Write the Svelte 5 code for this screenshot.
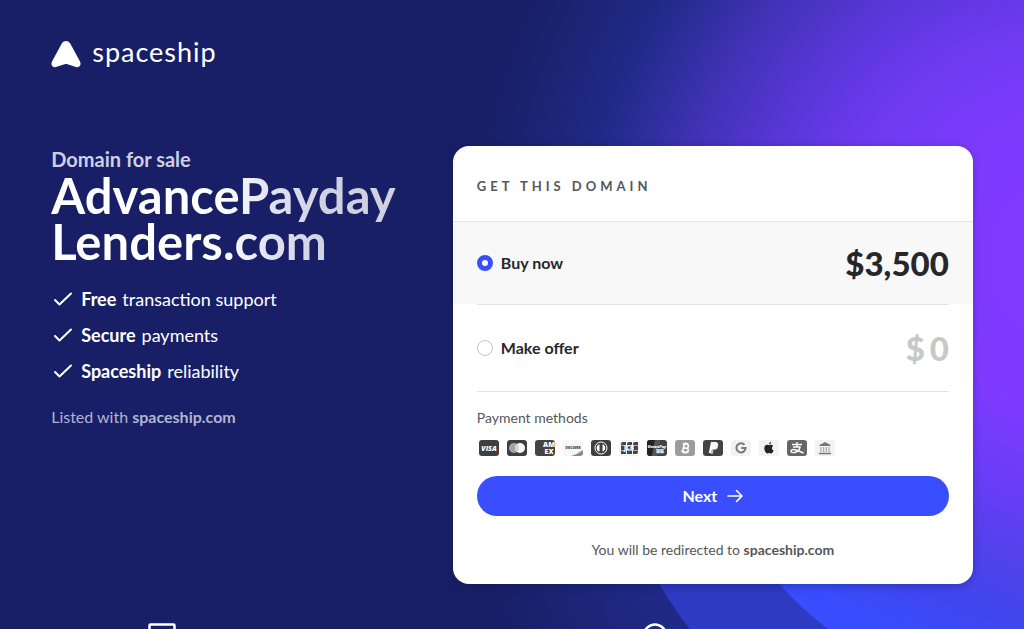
<script lang="ts">
	let selected = $state('buy');
	let offer = $state('');

	const domain = ['AdvancePayday', 'Lenders.com'];

	const benefits = [
		{ strong: 'Free', text: 'transaction support' },
		{ strong: 'Secure', text: 'payments' },
		{ strong: 'Spaceship', text: 'reliability' }
	];

	const methods = [
		{ id: 'visa', label: 'Visa', bg: '#3f3f41' },
		{ id: 'mastercard', label: 'Mastercard', bg: '#3f3f41' },
		{ id: 'amex', label: 'American Express', bg: '#444446' },
		{ id: 'discover', label: 'Discover', bg: '#f7f7f7' },
		{ id: 'diners', label: 'Diners Club', bg: '#3f3f41' },
		{ id: 'jcb', label: 'JCB', bg: '#f3f3f3' },
		{ id: 'unionpay', label: 'UnionPay', bg: '#434345' },
		{ id: 'bitcoin', label: 'Bitcoin', bg: '#9c9c9c' },
		{ id: 'paypal', label: 'PayPal', bg: '#434345' },
		{ id: 'google', label: 'Google Pay', bg: '#f2f2f2' },
		{ id: 'apple', label: 'Apple Pay', bg: '#f2f2f2' },
		{ id: 'alipay', label: 'Alipay', bg: '#666668' },
		{ id: 'bank', label: 'Bank transfer', bg: '#f2f2f2' }
	];
</script>

<div class="page">
	<svg class="backdrop" viewBox="0 0 1024 629" preserveAspectRatio="xMaxYMin slice" aria-hidden="true">
		<defs>
			<radialGradient id="glow" gradientUnits="userSpaceOnUse" cx="1070" cy="260" r="640">
				<stop offset="0" stop-color="#833aff" />
				<stop offset="0.2" stop-color="#7f3aff" />
				<stop offset="0.36" stop-color="#6f3af2" />
				<stop offset="0.48" stop-color="#5a37da" />
				<stop offset="0.6" stop-color="#4333b9" />
				<stop offset="0.69" stop-color="#2e2e9c" />
				<stop offset="0.75" stop-color="#202a88" />
				<stop offset="0.85" stop-color="#1c2475" />
				<stop offset="0.94" stop-color="#181f66" />
			</radialGradient>
			<linearGradient id="inner" gradientUnits="userSpaceOnUse" x1="860" y1="620" x2="960" y2="370">
				<stop offset="0" stop-color="#384dff" />
				<stop offset="0.2" stop-color="#4046ee" />
				<stop offset="0.4" stop-color="#5042ec" />
				<stop offset="0.7" stop-color="#6c3cf8" />
				<stop offset="1" stop-color="#803aff" />
			</linearGradient>
			<radialGradient id="shade" gradientUnits="userSpaceOnUse" cx="720" cy="560" r="230">
				<stop offset="0" stop-color="#222b90" />
				<stop offset="0.4" stop-color="#1f2883" />
				<stop offset="1" stop-color="#181f66" />
			</radialGradient>
			<clipPath id="lower">
				<rect x="453" y="340" width="571" height="289" />
			</clipPath>
		</defs>
		<rect width="1024" height="629" fill="#181f66" />
		<rect width="1024" height="629" fill="url(#glow)" />
		<g clip-path="url(#lower)">
			<rect x="470" y="540" width="554" height="89" fill="url(#shade)" />
			<circle cx="1011" cy="381" r="406" fill="#2d3ac2" />
			<circle cx="1011" cy="381" r="308" fill="url(#inner)" />
		</g>
	</svg>

	<header>
		<a class="logo" href="/">
			<svg width="30" height="28" viewBox="0 0 30 28" aria-hidden="true">
				<path
					d="M15 1C12.900 1 11.500 2.200 10.500 4L1 21.500C-.7 25 1.500 28 5 27L13.500 24.200C14.500 23.900 15.500 23.900 16.500 24.200L25 27C28.500 28 30.700 25 29 21.500L19.500 4C18.500 2.200 17.100 1 15 1Z"
					fill="#fff"
				/>
			</svg>
			<span>spaceship</span>
		</a>
	</header>

	<main>
		<section class="intro">
			<p class="eyebrow">Domain for sale</p>
			<h1>{domain[0]}<br />{domain[1]}</h1>
			<ul class="benefits">
				{#each benefits as benefit}
					<li>
						<svg width="24" height="24" viewBox="0 0 24 24" aria-hidden="true">
							<path d="M4 13L8.500 17.500L20 6.500" fill="none" stroke="#fff" stroke-width="2" stroke-linecap="round" stroke-linejoin="round" />
						</svg>
						<strong>{benefit.strong}</strong>
						<span>{benefit.text}</span>
					</li>
				{/each}
			</ul>
			<p class="listed">Listed with <strong>spaceship.com</strong></p>
		</section>

		<form class="card" onsubmit={(e) => e.preventDefault()}>
			<h2>Get this domain</h2>

			<div class="option" class:active={selected === 'buy'}>
				<div class="row">
					<label>
						<input type="radio" name="purchase" value="buy" bind:group={selected} />
						Buy now
					</label>
					<span class="price">$3,500</span>
				</div>
			</div>

			<div class="option offer" class:active={selected === 'offer'}>
				<div class="row">
					<label>
						<input type="radio" name="purchase" value="offer" bind:group={selected} />
						Make offer
					</label>
					<span class="price amount">
						<span>$</span>
						<input type="text" inputmode="numeric" placeholder="0" aria-label="Offer amount" bind:value={offer} />
					</span>
				</div>
			</div>

			<div class="checkout">
				<p class="methods-title">Payment methods</p>
				<ul class="methods">
					{#each methods as method}
						<li>
							<svg width="20" height="16" viewBox="0 0 20 16" role="img" aria-label={method.label}>
								<rect width="20" height="16" rx="3" fill={method.bg} />
								{#if method.id === 'visa'}
									<text x="10" y="11" class="mark" font-size="7" font-style="italic" fill="#fff">VISA</text>
								{:else if method.id === 'mastercard'}
									<circle cx="7" cy="8" r="5" fill="#a5a5a5" />
									<circle cx="13" cy="8" r="5" fill="#f7f7f7" />
									<path d="M10 4A5 5 0 0 1 10 12A5 5 0 0 1 10 4Z" fill="#d2d2d2" />
								{:else if method.id === 'amex'}
									<text x="14" y="7" class="mark" font-size="7" fill="#fff">AM</text>
									<text x="14" y="14" class="mark" font-size="7" fill="#fff">EX</text>
								{:else if method.id === 'discover'}
									<path d="M20 10Q15 14 8 16H17Q20 16 20 13Z" fill="#8b8b8b" />
									<text x="10" y="9" class="mark" font-size="3" fill="#333">DISCOVER</text>
								{:else if method.id === 'diners'}
									<circle cx="10" cy="8" r="6" fill="none" stroke="#fff" />
									<path d="M8.500 4.200A4 4 0 0 0 8.500 11.800ZM11.500 4.200A4 4 0 0 1 11.500 11.800Z" fill="#fff" />
								{:else if method.id === 'jcb'}
									<path d="M4 2H7V14H2V4Q2 2 4 2ZM10 2H13V14H8V4Q8 2 10 2ZM16 2H19V12Q19 14 17 14H14V4Q14 2 16 2Z" fill="#444" />
									<path d="M1 5.500H19M1 10.500H19" stroke="#f3f3f3" stroke-width=".6" />
									<text x="10" y="10" class="mark" font-size="6" fill="#fff">JCB</text>
								{:else if method.id === 'unionpay'}
									<path d="M3 0H8L5 16H3Q0 16 0 13V3Q0 0 3 0Z" fill="#222" />
									<path d="M8 0H13L10 16H5Z" fill="#555" />
									<text x="10" y="8" class="mark" font-size="4" font-style="italic" fill="#fff">UnionPay</text>
									<text x="13" y="13" class="mark cjk" font-size="4" fill="#fff">银联</text>
								{:else if method.id === 'bitcoin'}
									<g transform="rotate(12 10 8)" fill="none" stroke="#fff" stroke-width="1.6">
										<path d="M7 4H11Q13 4 13 6T11 8H8.500H11.500Q13.800 8 13.800 10T11.500 12H7M8.500 4V12M9.500 2.500V4M11.500 2.500V4M9.500 12V13.500M11.500 12V13.500" />
									</g>
								{:else if method.id === 'paypal'}
									<path d="M8 2H12Q16 2.300 15 6Q14 9.500 10.500 9.500H9.500L8.800 13H5.800Z" fill="#fff" />
									<path d="M15 4.500Q16 9.500 11.500 10H10.500L9.800 14H7.500L8.500 10Q14 10.500 15 4.500Z" fill="#bbb" />
								{:else if method.id === 'google'}
									<path d="M13.500 4.800A4.600 4.600 0 1 0 14.600 8H10.300" fill="none" stroke="#777" stroke-width="2" />
								{:else if method.id === 'apple'}
									<path d="M10 5.200C11 4.500 13 4.300 14.200 6C12.300 7.200 12.700 9.800 14.700 10.500C13.700 13 12.500 13.900 11.300 13.300Q10.200 12.800 9 13.300C7.400 14 5.300 10.700 5.300 8.200C5.300 5 8 4.200 10 5.200ZM10 4.400Q10 2.300 12.200 1.800Q12.400 4.200 10 4.400Z" fill="#222" />
								{:else if method.id === 'alipay'}
									<path d="M5 4.500H15M10 2V7M6 7H13Q12 12.500 6 12.600Q3.500 12.500 4 10.800Q5 8.600 9 10Q13 11.500 16.500 13" fill="none" stroke="#fff" stroke-width="1.400" />
								{:else}
									<path d="M10 2L15.500 5V6H4.500V5Z" fill="#777" />
									<path d="M6 7V12M8.700 7V12M11.300 7V12M14 7V12" stroke="#999" />
									<path d="M4 13.500H16" stroke="#777" stroke-width="1.500" />
								{/if}
							</svg>
						</li>
					{/each}
				</ul>

				<button type="submit">
					Next
					<svg width="16" height="14" viewBox="0 0 16 14" aria-hidden="true">
						<path d="M1 7H15M9.500 1.500L15 7L9.500 12.500" fill="none" stroke="#fff" stroke-width="1.600" stroke-linecap="round" stroke-linejoin="round" />
					</svg>
				</button>

				<p class="redirect">You will be redirected to <strong>spaceship.com</strong></p>
			</div>
		</form>
	</main>

	<section class="features">
		<svg width="28" height="32" viewBox="0 0 28 32" aria-hidden="true">
			<rect x="1.500" y="1.500" width="25" height="29" rx="1" fill="none" stroke="#fff" stroke-width="2.500" />
		</svg>
		<svg width="24" height="32" viewBox="0 0 24 32" aria-hidden="true">
			<circle cx="12" cy="12.500" r="11" fill="none" stroke="#fff" stroke-width="2.500" />
		</svg>
	</section>
</div>

<style>
	:global(body) {
		background: #181f66;
	}

	.page {
		position: relative;
		height: 100vh;
		overflow: hidden;
		box-sizing: border-box;
		padding: 0 5%;
		color: #fff;
		font-family: Lato, 'Open Sans', sans-serif;
	}

	p,
	h1,
	h2,
	ul {
		margin: 0;
		padding: 0;
	}

	ul {
		list-style: none;
	}

	.backdrop {
		position: absolute;
		inset: 0;
		width: 100%;
		height: 100%;
		z-index: -1;
	}

	header {
		padding: 36px 0 74px;
	}

	.logo {
		display: flex;
		align-items: center;
		gap: 11px;
		height: 36px;
		color: #fff;
		text-decoration: none;
		font-size: 27px;
		line-height: 32px;
		font-weight: 400;
		letter-spacing: 1px;
	}

	.logo span {
		padding-bottom: 4px;
	}

	main {
		display: grid;
		grid-template-columns: minmax(0, 1fr) 520px;
		align-items: start;
		gap: 32px;
	}

	.eyebrow {
		color: #cfd0e3;
		font-size: 20px;
		line-height: 26px;
		font-weight: 700;
	}

	h1 {
		padding-bottom: 8px;
		background: linear-gradient(90deg, #fff 45%, #e0e1f0 60%, #cfd0e0 75%);
		background-clip: text;
		font-size: 49px;
		line-height: 46px;
		font-weight: 700;
		white-space: nowrap;
		-webkit-text-fill-color: transparent;
	}

	.benefits {
		display: flex;
		flex-direction: column;
		gap: 12px;
		margin-top: 15px;
		font-size: 18px;
		line-height: 24px;
	}

	.benefits li {
		display: flex;
		align-items: center;
		gap: 6px;
	}

	.listed {
		margin-top: 22px;
		color: #b2b4d0;
		font-size: 16px;
		line-height: 24px;
	}

	.card {
		overflow: hidden;
		border-radius: 16px;
		background: #fff;
		box-shadow: 0 2px 8px rgba(10, 15, 60, 0.3);
		color: #26272b;
	}

	h2 {
		padding: 30px 24px 25px;
		border-bottom: 1px solid #e4e5e8;
		color: #55565a;
		font-size: 13px;
		line-height: 20px;
		font-weight: 700;
		letter-spacing: 4px;
		text-transform: uppercase;
	}

	.option {
		padding: 0 24px;
	}

	.option.active {
		background: #f8f8f8;
	}

	.row {
		display: flex;
		align-items: center;
		justify-content: space-between;
		height: 82px;
	}

	.offer .row {
		height: 86px;
		border-top: 1px solid #e4e5e8;
		border-bottom: 1px solid #e4e5e8;
	}

	label {
		display: flex;
		align-items: center;
		gap: 8px;
		font-size: 16px;
		line-height: 24px;
		font-weight: 700;
	}

	input[type='radio'] {
		appearance: none;
		box-sizing: border-box;
		width: 16px;
		height: 16px;
		margin: 0;
		border: 1px solid #c4c4c6;
		border-radius: 50%;
		background: #fff;
	}

	input[type='radio']:checked {
		border: 5px solid #394eff;
	}

	.price {
		font-size: 33px;
		line-height: 40px;
		font-weight: 900;
	}

	.amount {
		display: flex;
		gap: 4px;
		color: #c8c8c8;
	}

	.amount input {
		width: 20px;
		padding: 0;
		border: 0;
		background: none;
		color: inherit;
		font: inherit;
		text-align: right;
	}

	.amount input::placeholder {
		color: #c8c8c8;
		opacity: 1;
	}

	.checkout {
		padding: 16px 24px 24px;
		color: #55565a;
	}

	.methods-title {
		font-size: 14px;
		line-height: 20px;
	}

	.methods {
		display: flex;
		gap: 8px;
		margin: 12px 2px 20px;
	}

	.methods li,
	.methods svg {
		display: block;
		height: 16px;
	}

	.mark {
		font-family: 'Open Sans', sans-serif;
		font-weight: 800;
		text-anchor: middle;
	}

	.cjk {
		font-family: 'Noto Sans CJK SC', sans-serif;
	}

	button {
		display: flex;
		align-items: center;
		justify-content: center;
		gap: 10px;
		width: 100%;
		height: 40px;
		border: 0;
		border-radius: 20px;
		background: #394eff;
		color: #fff;
		font: 700 16px/24px Lato, sans-serif;
		cursor: pointer;
	}

	.redirect {
		margin-top: 24px;
		font-size: 14px;
		line-height: 20px;
		text-align: center;
	}

	.features {
		display: grid;
		grid-template-columns: 3fr 2fr;
		margin-top: 39px;
		padding-left: 97px;
	}
</style>
